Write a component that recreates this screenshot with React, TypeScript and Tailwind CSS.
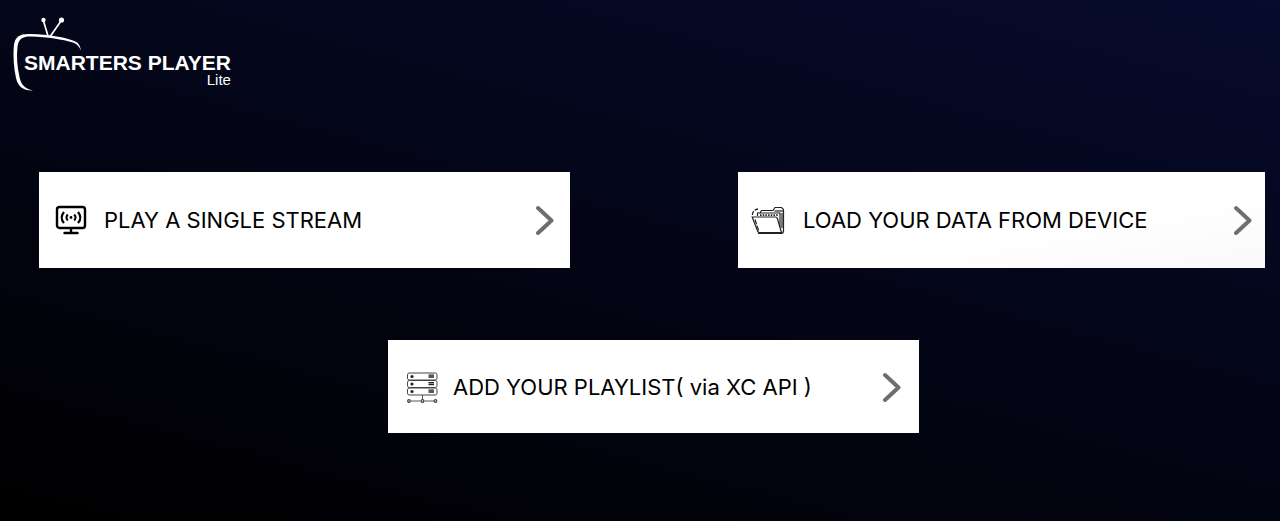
import type { ReactNode } from 'react';

interface MenuCardProps {
  icon: ReactNode;
  label: string;
  className?: string;
}

function Logo() {
  return (
    <div className="relative w-fit pt-[37px] pl-[11px] font-['Liberation_Sans',Arial,sans-serif] text-white">
      <svg
        className="absolute top-0 left-0"
        width="72"
        height="76"
        viewBox="0 0 72 76"
        fill="none"
        aria-hidden="true"
      >
        <path d="M35 20 30.500 5M37.500 20 48 5" stroke="currentColor" strokeWidth="1.700" />
        <circle cx="30.500" cy="4" r="2.200" fill="currentColor" />
        <circle cx="48.500" cy="4" r="2.600" fill="currentColor" />
        <path
          d="M68 34.500C67 29 65 26 60 24.500 50 21 36 18.500 18 18 7 17.500 2 20 0.800 30 0 40 0.800 52 3 62 5 71 11 75 20 74.500 12 72.500 8 69 6.500 61 4 50 3.500 40 4.500 31 5.500 23 9 20.500 18 20.500 34 21 50 23.500 60 26.500 64 28 66 30.500 68 34.500Z"
          fill="currentColor"
        />
      </svg>
      <h1 className="relative text-[21px] leading-5 font-bold whitespace-nowrap">SMARTERS PLAYER</h1>
      <p className="text-right text-[15px] leading-[14px]">Lite</p>
    </div>
  );
}

function StreamIcon() {
  return (
    <svg width="32" height="32" viewBox="0 0 32 32" fill="none" stroke="currentColor" aria-hidden="true">
      <rect x="2" y="3" width="28" height="21" rx="2.500" strokeWidth="2.400" />
      <path d="M16 24.500v4M9.500 29h13" strokeWidth="2.400" strokeLinecap="round" />
      <path d="M9 8c-3 3.500-3 7.500 0 11M23 8c3 3.500 3 7.500 0 11" strokeWidth="2.200" />
      <path d="M12.800 10.500c-1.800 2-1.800 4 0 6M19.200 10.500c1.800 2 1.800 4 0 6" strokeWidth="2" />
      <circle cx="16" cy="13.500" r="1.400" fill="currentColor" stroke="none" />
    </svg>
  );
}

function FolderIcon() {
  return (
    <svg width="34" height="32" viewBox="0 0 34 32" fill="none" stroke="#222" strokeWidth="1.200" aria-hidden="true">
      <path d="M7 29.500h23q2.500 0 2.500-2.500V6q0-1-1-1.500L30.500 3.500H24L22 6.500H10.500L9 9" />
      <path d="M23.500 7H32" />
      <path d="M1.200 13h23q1.800 0 2.200 1.500L30.500 28.500H8.500q-1.500 0-1.900-1.500Z" />
      <path d="M4 15.500 7.800 27" strokeDasharray="5 1.500" />
      <path d="M6.500 12V9h22.500v14M31 9v15" />
      <path d="M9 11.200h18" strokeWidth="1.800" strokeDasharray="1.500 1.200" />
      <path d="M1.300 11C1.800 7.500 3.500 5.500 7 5" strokeWidth="1.300" strokeDasharray="4 1.500" />
    </svg>
  );
}

function ServerIcon() {
  return (
    <svg width="32" height="32" viewBox="0 0 32 32" fill="none" stroke="#444" strokeWidth="1" aria-hidden="true">
      {[2, 9.5, 17].map((y) => (
        <g key={y}>
          <rect x="1.500" y={y} width="29.500" height="7" rx="1.800" />
          <circle cx="6" cy={y + 3.5} r="1.600" fill="#222" stroke="none" />
          <path d={`M22.500 ${y + 2.2}h5.500M22.500 ${y + 4}h5.500`} stroke="#222" strokeWidth="1.300" />
        </g>
      ))}
      <path d="M16.500 24v4.500M4.500 30h10M18.500 30H28" strokeWidth="0.900" />
      <circle cx="3" cy="30" r="1.300" strokeWidth="1.300" />
      <circle cx="16.500" cy="30" r="1.400" strokeWidth="1.300" />
      <circle cx="29.500" cy="30" r="1.300" strokeWidth="1.300" />
    </svg>
  );
}

function Chevron() {
  return (
    <svg
      className="ml-auto shrink-0 text-[#6e6e6e]"
      width="18"
      height="30"
      viewBox="0 0 18 30"
      fill="none"
      stroke="currentColor"
      strokeWidth="4"
      strokeLinecap="round"
      strokeLinejoin="round"
      aria-hidden="true"
    >
      <path d="M2 3 15.500 15.500 2 28" />
    </svg>
  );
}

function MenuCard({ icon, label, className = '' }: MenuCardProps) {
  return (
    <button
      type="button"
      className={`flex items-center bg-white text-left font-[Inter,sans-serif] text-[22px] leading-7 text-black ${className}`}
    >
      <span className="shrink-0">{icon}</span>
      <span>{label}</span>
      <Chevron />
    </button>
  );
}

export default function App() {
  return (
    <main className="min-h-screen bg-linear-[15deg] from-black via-[#04061a] via-60% to-[#070b2c]">
      <header className="px-[13px] pt-4">
        <Logo />
      </header>
      <div className="grid grid-cols-[531fr_527fr] gap-[168px] pt-[85px] pr-[15px] pl-[39px]">
        <MenuCard icon={<StreamIcon />} label="PLAY A SINGLE STREAM" className="min-h-24 gap-[17px] px-4 py-4" />
        <MenuCard
          icon={<FolderIcon />}
          label="LOAD YOUR DATA FROM DEVICE"
          className="min-h-24 gap-[18px] bg-linear-to-tl from-[#f9f9f9] to-white to-40% py-4 pr-[13px] pl-[13px]"
        />
      </div>
      <div className="flex justify-center pt-[72px] pb-8 pl-[27px]">
        <MenuCard
          icon={<ServerIcon />}
          label="ADD YOUR PLAYLIST( via XC API )"
          className="min-h-[93px] w-[531px] max-w-full gap-[15px] px-[18px] py-4"
        />
      </div>
    </main>
  );
}
